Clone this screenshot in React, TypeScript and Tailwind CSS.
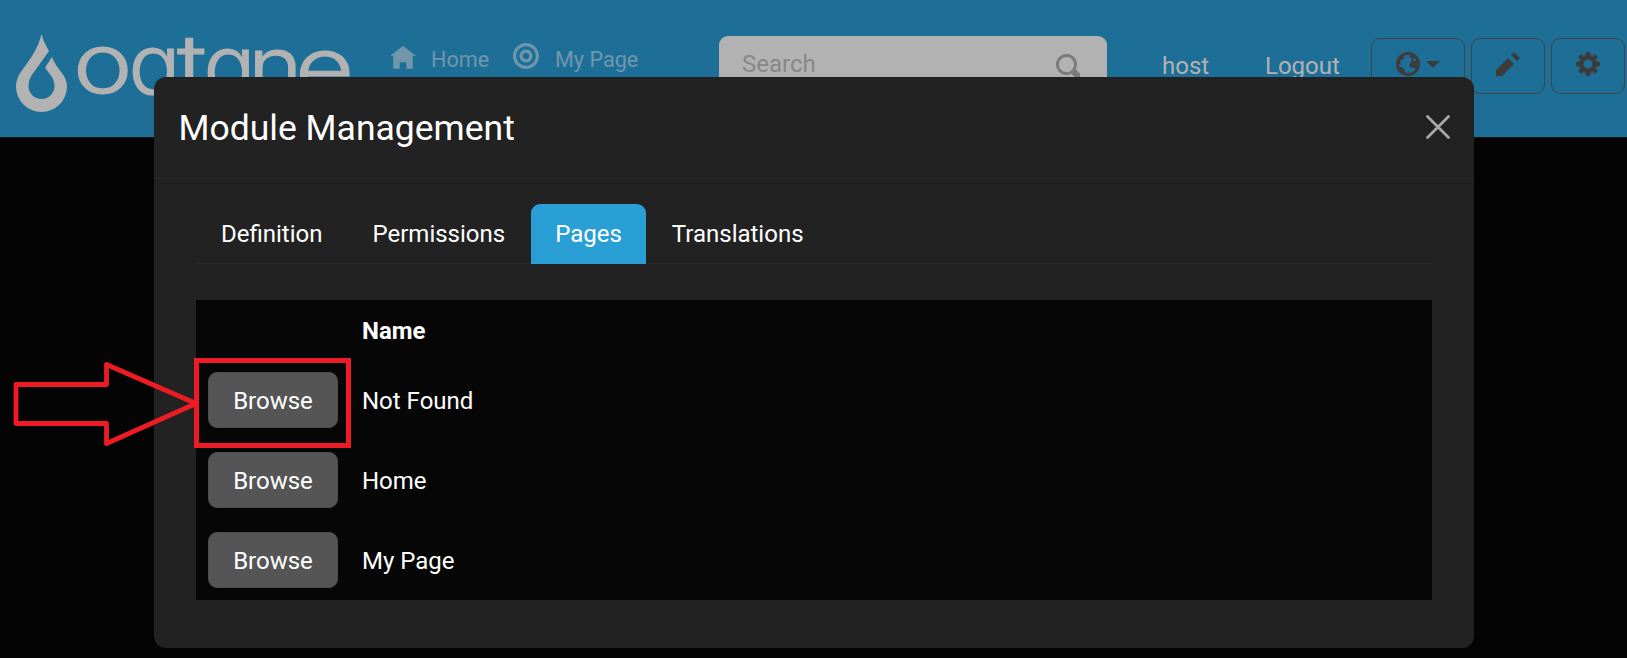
import type { ReactNode } from 'react';

const icons = {
  home: 'M4 0l-4 3h1v4h2v-2h2v2h2v-4.03l1 .03-4-3z',
  target:
    'M4 0c-2.2 0-4 1.8-4 4s1.8 4 4 4 4-1.8 4-4-1.8-4-4-4zm0 1c1.66 0 3 1.34 3 3s-1.34 3-3 3-3-1.34-3-3 1.34-3 3-3zm0 1c-1.1 0-2 .9-2 2s.9 2 2 2 2-.9 2-2-.9-2-2-2zm0 1c.56 0 1 .44 1 1s-.44 1-1 1-1-.44-1-1 .44-1 1-1z',
  search:
    'M3.5 0c-1.93 0-3.5 1.57-3.5 3.5s1.57 3.5 3.5 3.5c.59 0 1.17-.14 1.66-.41a1 1 0 0 0 .13.13l1 1a1.02 1.02 0 1 0 1.44-1.44l-1-1a1 1 0 0 0-.16-.13c.27-.49.44-1.06.44-1.66 0-1.93-1.55-3.5-3.5-3.5zm0 1c1.39 0 2.5 1.11 2.5 2.5 0 .66-.24 1.27-.66 1.72-.01.01-.02.02-.03.03a1 1 0 0 0-.13.13c-.44.4-1.04.63-1.69.63-1.39 0-2.5-1.11-2.5-2.5s1.11-2.5 2.5-2.5z',
  globe:
    'M4 0c-2.2 0-4 1.8-4 4s1.8 4 4 4 4-1.8 4-4-1.8-4-4-4zm0 1c.33 0 .64.09.94.19-.21.2-.45.38-.41.56.04.18.69.13.69.5 0 .27-.42.35-.13.66.35.35-.64.98-.66 1.44-.03.83.84.97 1.53.97.42 0 .53.2.5.44-.54.77-1.46 1.25-2.47 1.25-.38 0-.73-.09-1.06-.22.22-.44-.28-1.31-.75-1.59-.23-.23-.72-.14-1-.25-.09-.27-.18-.54-.19-.84.03-.05.08-.09.16-.09.19 0 .45.38.59.34.18-.04-.74-1.31-.31-1.56.2-.12.6.39.47-.16-.12-.51.36-.28.66-.41.26-.11.45-.41.13-.59-.06-.03-.13-.1-.22-.19.45-.27.97-.44 1.53-.44zm2.31 1.09c.18.22.32.46.44.72 0 .01 0 .02 0 .03-.04.07-.11.11-.22.22-.28.28-.32-.21-.44-.31-.13-.12-.6.02-.66-.13-.07-.18.5-.42.88-.53z',
  pencil: 'M6 0l-1 1 2 2 1-1-2-2zm-2 2l-4 4v2h2l4-4-2-2z',
  cog: 'M3.5 0l-.5 1.19c-.1.03-.19.08-.28.13l-1.19-.5-.72.72.5 1.19c-.05.1-.09.18-.13.28l-1.19.5v1l1.19.5c.04.1.08.18.13.28l-.5 1.19.72.72 1.19-.5c.09.04.18.09.28.13l.5 1.19h1l.5-1.19c.09-.04.19-.08.28-.13l1.19.5.72-.72-.5-1.19c.04-.09.09-.19.13-.28l1.19-.5v-1l-1.19-.5c-.03-.09-.08-.19-.13-.28l.5-1.19-.72-.72-1.19.5c-.09-.04-.19-.09-.28-.13l-.5-1.19h-1zm.5 2.5c.83 0 1.5.67 1.5 1.5s-.67 1.5-1.5 1.5-1.5-.67-1.5-1.5.67-1.5 1.5-1.5z',
};

function Icon({ name, className }: { name: keyof typeof icons; className: string }) {
  return (
    <svg viewBox="0 0 8 8" className={`shrink-0 ${className}`} fill="currentColor" aria-hidden="true">
      <path d={icons[name]} />
    </svg>
  );
}

// Wordmark letters, each with its own position and horizontal stretch.
const wordmark = [
  { letter: 'o', x: 73, y: 92.5, stretch: 1.21 },
  { letter: 'q', x: 128.5, y: 93.5, stretch: 1.04 },
  { letter: 't', x: 177, y: 94, stretch: 1.2 },
  { letter: 'a', x: 203.5, y: 95, stretch: 1.04 },
  { letter: 'n', x: 248, y: 96, stretch: 1.12 },
  { letter: 'e', x: 295, y: 97, stretch: 1.23 },
];

function Logo() {
  return (
    <svg viewBox="0 0 370 137" className="h-[137px] w-[370px] shrink-0" fill="#b2b2b2">
      <path d="M41.5 34C43 40 46 46 49 51L34 72C30 77 28.500 81 28.500 86A13 13 0 0 0 54.500 86C54.500 79 51 76 45 67.500L52 57C54 63 58 68 61.500 72.500C65 77 67 81 67 86.500A25.500 25.500 0 0 1 16 86.500C16 81 18 76 21.500 71C29 61 38 49 41.500 34Z" />
      <g
        className="font-['Inter',sans-serif] text-[83px] font-light [font-feature-settings:'cv11']"
        stroke="#b2b2b2"
        strokeWidth="1.2"
      >
        {wordmark.map(({ letter, x, y, stretch }) => (
          <text key={letter} transform={`translate(${x} ${y}) scale(${stretch} 1)`}>
            {letter}
          </text>
        ))}
      </g>
    </svg>
  );
}

function ToolButton({ children, className }: { children: ReactNode; className: string }) {
  return (
    <button
      className={`flex h-14 shrink-0 items-center rounded-[9px] border border-[#444] text-[#3c3c3c] ${className}`}
    >
      {children}
    </button>
  );
}

function TopBar() {
  return (
    <header className="flex h-[138px] w-full items-start border-b border-[#161616] bg-[#1e6f97]">
      <Logo />
      <nav className="flex pt-[43px] pl-5 text-[21.6px] leading-[34px] text-[#7096ac]">
        <a className="flex w-[123px]">
          <Icon name="home" className="mt-[3px] mr-[15px] size-[26px]" />
          <span>Home</span>
        </a>
        <a className="flex w-[206px]">
          <Icon name="target" className="mr-4 size-[26px]" />
          <span>My Page</span>
        </a>
      </nav>
      <div className="mt-9 flex h-14 w-[388px] shrink-0 items-start justify-between rounded-[9px] bg-[#b2b2b2] pr-[27px] pl-[23px] text-[#868888]">
        <span className="pt-[10px] leading-9">Search</span>
        <Icon name="search" className="mt-[18px] size-6 text-[#7b7b7b]" />
      </div>
      <div className="flex pt-12 pl-[55px] leading-9 text-[#b2b2b2]">
        <span className="w-[103px]">host</span>
        <span className="w-[106px]">Logout</span>
      </div>
      <div className="flex gap-[6px] pt-[38px]">
        <ToolButton className="w-[94px] gap-[6px] pb-1 pl-6">
          <Icon name="globe" className="size-6" />
          <span className="mt-px border-x-[7px] border-t-[7px] border-x-transparent border-t-[#3c3c3c]" />
        </ToolButton>
        <ToolButton className="w-[74px] justify-center pb-1">
          <Icon name="pencil" className="size-6" />
        </ToolButton>
        <ToolButton className="w-[74px] justify-center pb-1">
          <Icon name="cog" className="size-6" />
        </ToolButton>
      </div>
    </header>
  );
}

const tabs = ['Definition', 'Permissions', 'Pages', 'Translations'];
const pages = ['Not Found', 'Home', 'My Page'];

function ModuleDialog() {
  return (
    <section className="absolute top-[77px] left-[154px] flex h-[571px] w-[1320px] flex-col rounded-xl bg-[#222] text-white">
      <div className="flex h-[102px] shrink-0 items-center justify-between border-b border-[#282828] pr-6 pl-[24.5px]">
        <h5 className="text-[35.5px] leading-[54px]">Module Management</h5>
        <svg viewBox="0 0 16 16" className="mb-[2px] size-6" fill="none" stroke="#a9a9a9" strokeWidth="1.8" strokeLinecap="round">
          <path d="M1 1l14 14M15 1L1 15" />
        </svg>
      </div>
      <div className="px-[42px] pt-[25px]">
        <div className="flex h-[60px] border-b border-[#282828]">
          {tabs.map((tab) => (
            <div
              key={tab}
              className={`mx-px h-[60px] px-6 pt-3 leading-9 ${tab === 'Pages' ? 'rounded-t-[9px] bg-[#2a9fd6]' : ''}`}
            >
              {tab}
            </div>
          ))}
        </div>
        <div className="mt-9 bg-[#060606]">
          <div className="flex h-[60px] items-center pt-[2px] pl-[166px] font-bold">Name</div>
          {pages.map((page) => (
            <div key={page} className="flex h-20 items-center gap-6 px-3">
              <button className="h-14 w-[130px] rounded-[9px] border border-[#4d4d4d] bg-[#555] pt-[2px]">Browse</button>
              <span className="pt-[2px]">{page}</span>
            </div>
          ))}
        </div>
      </div>
    </section>
  );
}

function Callout() {
  return (
    <>
      <svg viewBox="0 0 190 90" className="absolute top-[358px] left-[10px] h-[90px] w-[190px]" fill="none" stroke="#ed1c24" strokeWidth="4.800" strokeLinejoin="round">
        <path d="M6 26.500H96.500V6.500L186 45.500L96.500 85.500V65.500H6Z" />
      </svg>
      <div className="absolute top-[358px] left-[194px] h-[90px] w-[157px] border-5 border-[#ed1c24]" />
    </>
  );
}

export default function App() {
  return (
    <div className="relative h-[658px] w-[1627px] overflow-hidden bg-[#040404] font-['Roboto',sans-serif] text-2xl">
      <TopBar />
      <ModuleDialog />
      <Callout />
    </div>
  );
}
